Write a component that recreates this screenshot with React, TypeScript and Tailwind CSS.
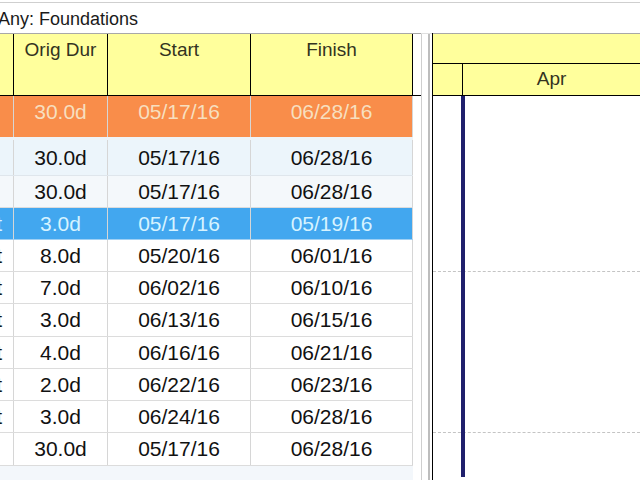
const font = { fontFamily: '"Liberation Sans", Arial, sans-serif' };

type Row = {
  dur: string;
  start: string;
  finish: string;
  h: string;
  tag?: boolean;
  kind?: "orange" | "blue" | "tint" | "tint2";
};

const rows: Row[] = [
  { dur: "30.0d", start: "05/17/16", finish: "06/28/16", h: "h-[44px]", kind: "orange" },
  { dur: "30.0d", start: "05/17/16", finish: "06/28/16", h: "h-[36px]", kind: "tint" },
  { dur: "30.0d", start: "05/17/16", finish: "06/28/16", h: "h-[32px]", kind: "tint2" },
  { dur: "3.0d", start: "05/17/16", finish: "05/19/16", h: "h-[32px]", kind: "blue", tag: true },
  { dur: "8.0d", start: "05/20/16", finish: "06/01/16", h: "h-[32px]", tag: true },
  { dur: "7.0d", start: "06/02/16", finish: "06/10/16", h: "h-[32px]", tag: true },
  { dur: "3.0d", start: "06/13/16", finish: "06/15/16", h: "h-[33px]", tag: true },
  { dur: "4.0d", start: "06/16/16", finish: "06/21/16", h: "h-[32px]", tag: true },
  { dur: "2.0d", start: "06/22/16", finish: "06/23/16", h: "h-[32px]", tag: true },
  { dur: "3.0d", start: "06/24/16", finish: "06/28/16", h: "h-[32px]", tag: true },
  { dur: "30.0d", start: "05/17/16", finish: "06/28/16", h: "h-[33px]" },
];

function rowStyle(kind?: Row["kind"]) {
  if (kind === "orange") return "bg-[#f98d4a] text-[#f7dfbf] border-b-[3px] border-[#eef3f7]";
  if (kind === "blue") return "bg-[#42a7ef] text-[#d6f3ff] border-b border-[#9fd0f4]";
  if (kind === "tint") return "bg-[#ecf5fb] text-[#111] border-b border-[#dfe6ec]";
  if (kind === "tint2") return "bg-[#f4f8fb] text-[#111] border-b border-[#dcdcdc]";
  return "bg-white text-[#111] border-b border-[#dcdcdc]";
}

function TableRow({ r }: { r: Row }) {
  const cell = "flex h-full justify-center border-r border-[#d6d6d6]";
  const align = r.kind === "orange" ? "items-start" : "items-center";
  return (
    <div className={`flex ${r.h} ${rowStyle(r.kind)}`}>
      <div className={`flex h-full w-[14px] justify-end overflow-hidden pr-[11px] ${align} border-r border-[#d6d6d6]`}>
        {r.tag ? "t" : ""}
      </div>
      <div className={`${cell} ${align} w-[94px]`}>{r.dur}</div>
      <div className={`${cell} ${align} w-[143px]`}>{r.start}</div>
      <div className={`${cell} ${align} w-[162px]`}>{r.finish}</div>
    </div>
  );
}

export default function App() {
  return (
    <div className="flex h-[480px] w-[640px] flex-col overflow-hidden bg-white" style={font}>
      <div className="h-[2px] bg-white" />
      <div className="h-px bg-[#cfcfcf]" />
      <div className="flex h-[30px] items-center -ml-[2px] pt-[2px] text-[18px] text-[#1a1a1a]">Any: Foundations</div>

      <div className="flex min-h-0 flex-1">
        {/* left grid */}
        <div className="flex w-[421px] flex-col">
          <div className="flex h-[63px] border-t border-[#a8a8a8]">
            <div className="flex h-full w-[413px] border-b border-black bg-[#ffff9c] text-[19px] text-[#33331f]">
              <div className="w-[14px] border-r border-black" />
              <div className="flex w-[94px] justify-center border-r border-black pt-[2px]">Orig Dur</div>
              <div className="flex w-[143px] justify-center border-r border-black pt-[2px]">Start</div>
              <div className="flex w-[162px] justify-center border-r border-black pt-[2px]">Finish</div>
            </div>
            <div className="h-full w-[8px] border-b border-black bg-white" />
          </div>
          <div className="flex flex-col text-[21px]">
            {rows.map((r, i) => (
              <div key={i} className="w-[413px]">
                <TableRow r={r} />
              </div>
            ))}
          </div>
          <div className="w-[413px] flex-1 bg-[#f3f7fb]" />
        </div>

        {/* splitter */}
        <div className="flex w-[11px] border-t border-[#e0e0e0]">
          <div className="w-px bg-[#cfcfcf]" />
          <div className="w-[6px]" />
          <div className="w-[2px] bg-[#bdbdbd]" />
          <div className="w-[2px]" />
        </div>

        {/* gantt */}
        <div className="flex flex-1 flex-col border-l border-black">
          <div className="flex h-[63px] flex-col border-t border-[#a8a8a8] bg-[#ffff9c] text-[19px] text-[#33331f]">
            <div className="h-[30px] border-b border-black" />
            <div className="flex flex-1 border-b border-black">
              <div className="w-[30px] border-r border-black" />
              <div className="flex flex-1 items-center justify-center pb-[1px]">Apr</div>
            </div>
          </div>
          <div className="relative flex flex-1 flex-col">
            {rows.map((r, i) => (
              <div
                key={i}
                className={`${r.h} ${i === 4 || i === 9 ? "border-b border-dashed border-[#c4c4c4]" : ""}`}
              />
            ))}
            <div className="absolute left-[28px] top-0 h-[381px] w-[4px] bg-[#1f1f6c]" />
          </div>
        </div>
      </div>
    </div>
  );
}
